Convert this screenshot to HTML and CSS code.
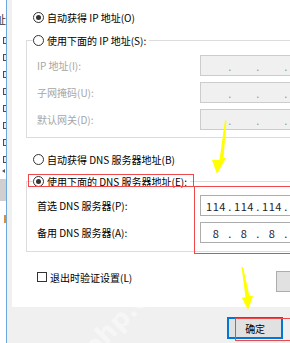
FILE: index.html
```html
<!DOCTYPE html>
<html lang="zh-CN">
<head>
    <meta charset="UTF-8">
    <title>Internet 协议版本 4 (TCP/IPv4) 属性</title>
    <link rel="stylesheet" href="styles.css">
</head>

<body>
    <div class="screen">

        <!-- list window behind the dialog, only its edge shows -->
        <div class="side">
            <span class="side-char">址</span>
            <div class="side-icons">
                <i></i><i></i><i></i><i></i><i></i><i></i><i></i><i></i>
            </div>
            <span class="side-arrow"></span>
            <div class="side-band"></div>
            <span class="side-mark"></span>
        </div>

        <div class="dialog">
            <div class="panel">
                <div class="opt top">
                    <span class="radio on"></span>
                    <span>自动获得 IP 地址(O)</span>
                </div>

                <div class="group">
                    <div class="opt legend">
                        <span class="radio"></span>
                        <span>使用下面的 IP 地址(S):</span>
                    </div>
                    <div class="field disabled">
                        <span class="field-label">IP 地址(I):</span>
                        <div class="ip"><span></span><b>.</b><span></span><b>.</b><span></span><b>.</b><span></span></div>
                    </div>
                    <div class="field disabled">
                        <span class="field-label">子网掩码(U):</span>
                        <div class="ip"><span></span><b>.</b><span></span><b>.</b><span></span><b>.</b><span></span></div>
                    </div>
                    <div class="field disabled">
                        <span class="field-label">默认网关(D):</span>
                        <div class="ip"><span></span><b>.</b><span></span><b>.</b><span></span><b>.</b><span></span></div>
                    </div>
                </div>

                <div class="opt top dns-auto">
                    <span class="radio"></span>
                    <span>自动获得 DNS 服务器地址(B)</span>
                </div>

                <div class="group dns">
                    <div class="opt legend">
                        <span class="radio on"></span>
                        <span>使用下面的 DNS 服务器地址(E):</span>
                    </div>
                    <div class="field">
                        <span class="field-label">首选 DNS 服务器(P):</span>
                        <div class="ip"><span>114</span><b>.</b><span>114</span><b>.</b><span>114</span><b>.</b><span>114</span></div>
                    </div>
                    <div class="field">
                        <span class="field-label">备用 DNS 服务器(A):</span>
                        <div class="ip"><span>8</span><b>.</b><span>8</span><b>.</b><span>8</span><b>.</b><span>8</span></div>
                    </div>
                </div>

                <div class="check-row">
                    <label class="check">
                        <span class="box"></span>
                        <span>退出时验证设置(L)</span>
                    </label>
                    <button class="btn adv">高级(V)...</button>
                </div>
            </div>

            <div class="footer">
                <button class="btn ok">确定</button>
                <button class="btn">取消</button>
            </div>
        </div>

        <!-- tutorial marks drawn over the dialog -->
        <span class="mark mark-legend"></span>
        <span class="mark mark-inputs"></span>
        <span class="mark mark-ok"></span>
        <svg class="arrows" width="290" height="343" viewBox="0 0 290 343">
            <polygon points="225,120 226.5,121 223.5,158 226,158 217,174 212,160 219.5,160" fill="#ffff00"/>
            <polygon points="241.5,267 243,267 249.5,296 253,296 248,310 242,298 245.5,297" fill="#ffff00"/>
        </svg>
        <span class="watermark">php.cn</span>
    </div>
</body>
</html>
```

FILE: styles.css
```css
/* Windows dialog colours */
:root {
    --face: #f0f0f0;
    --line: #dcdcdc;
    --text: #000000;
    --muted: #a6a6a6;
    --field-border: #adadad;
    --accent: #0078d7;
    --mark: #f04848;
}

body {
    margin: 0;
    font-family: "Noto Sans CJK SC", "Noto Sans", sans-serif;
    font-size: 10px;
    color: var(--text);
}

.screen {
    position: relative;
    width: 290px;
    height: 343px;
    overflow: hidden;
    display: flex;
    background: var(--face);
}

/* Left edge of the window behind */
.side {
    width: 6px;
    flex: none;
    background: #ffffff;
    border-right: 1px solid #6ea7dd;
    overflow: hidden;
    display: flex;
    flex-direction: column;
}

.side-char {
    margin: 12px 0 0 -5px;
    height: 14px;
    line-height: 14px;
    font-size: 11px;
    color: #333;
}

.side-icons {
    margin-top: 11px;
    display: flex;
    flex-direction: column;
    gap: 10px;
}

.side-icons i {
    display: block;
    width: 5px;
    height: 7px;
    margin-left: 3px;
    border: 1px solid #4d4d4d;
    box-sizing: border-box;
    background: #e8eef5;
}

.side-arrow {
    margin: 6px 0 0 2px;
    width: 0;
    height: 0;
    border-top: 2px solid transparent;
    border-bottom: 2px solid transparent;
    border-right: 3px solid #555;
}

.side-band {
    margin-top: 6px;
    height: 22px;
    background: #cfcfcf;
}

.side-mark {
    margin: 14px 0 0 4px;
    width: 2px;
    height: 8px;
    background: #e08a3c;
}

/* Dialog */
.dialog {
    flex: none;
    width: 340px;
    display: flex;
    flex-direction: column;
}

.panel {
    margin-left: 5px;
    height: 307px;
    box-sizing: border-box;
    background: #ffffff;
    padding: 10px 0 0 14px;
}

.opt {
    display: flex;
    align-items: center;
    gap: 3px;
    height: 14px;
    white-space: nowrap;
}

.opt.top {
    margin-left: 7px;
}

.opt.dns-auto {
    margin-top: 14px;
}

.radio {
    width: 11px;
    height: 11px;
    flex: none;
    box-sizing: border-box;
    border: 1px solid #333;
    border-radius: 50%;
    background: #fff;
    display: flex;
    align-items: center;
    justify-content: center;
}

.radio.on::after {
    content: "";
    width: 5px;
    height: 5px;
    border-radius: 50%;
    background: #333;
}

/* Group boxes whose title is a radio button */
.group {
    margin-top: 16px;
    width: 300px;
    border: 1px solid var(--line);
    padding-bottom: 7px;
}

.group.dns {
    margin-top: 15px;
    padding-bottom: 8px;
}

.legend {
    width: max-content;
    margin: -8px 0 0 6px;
    padding-right: 3px;
    background: #fff;
}

.field {
    display: flex;
    align-items: center;
    height: 21px;
    margin-top: 6px;
    padding-left: 10px;
    white-space: nowrap;
}

.legend + .field {
    margin-top: 8px;
}

.group.dns .legend + .field {
    margin-top: 7px;
}

.field-label {
    width: 163px;
    flex: none;
}

.field.disabled .field-label {
    color: var(--muted);
}

.ip {
    width: 125px;
    height: 21px;
    box-sizing: border-box;
    border: 1px solid var(--field-border);
    background: #fff;
    padding-left: 3px;
    display: flex;
    align-items: center;
    font-size: 11px;
    color: #1b1b2e;
    letter-spacing: 0.5px;
}

.ip span {
    width: 24px;
    text-align: center;
}

.ip b {
    width: 4px;
    font-weight: normal;
    text-align: center;
}

.field.disabled .ip {
    background: var(--face);
    border-color: #cccccc;
    color: #9a9a9a;
}

/* Bottom row of the panel */
.check-row {
    display: grid;
    grid-template-columns: 250px 75px;
    align-items: start;
    margin-top: 18px;
}

.check {
    display: flex;
    align-items: center;
    gap: 3px;
    height: 14px;
    margin-left: 11px;
}

.box {
    width: 10px;
    height: 10px;
    box-sizing: border-box;
    border: 1px solid #333;
    background: #fff;
}

.btn {
    height: 22px;
    width: 75px;
    box-sizing: border-box;
    border: 1px solid var(--field-border);
    background: #e1e1e1;
    font-family: inherit;
    font-size: 10px;
    color: var(--text);
    padding: 0;
}

.adv {
    margin-top: 1px;
    height: 21px;
}

.footer {
    flex: 1;
    display: flex;
    gap: 8px;
    padding: 10px 0 0 220px;
}

.btn.ok {
    border: 2px solid var(--accent);
}

/* Red boxes, yellow arrows and the site watermark */
.mark {
    position: absolute;
    border: 1px solid var(--mark);
    box-sizing: border-box;
}

.mark-legend {
    left: 28px;
    top: 174px;
    width: 166px;
    height: 13px;
}

.mark-inputs {
    left: 194px;
    top: 186px;
    width: 110px;
    height: 68px;
}

.mark-ok {
    left: 235px;
    top: 318px;
    width: 70px;
    height: 23px;
}

.arrows {
    position: absolute;
    left: 0;
    top: 0;
}

.watermark {
    position: absolute;
    left: 72px;
    top: 302px;
    transform: rotate(-45deg);
    font-family: "DejaVu Sans", sans-serif;
    font-weight: bold;
    font-size: 26px;
    color: rgba(255, 255, 255, 0.45);
}
```
